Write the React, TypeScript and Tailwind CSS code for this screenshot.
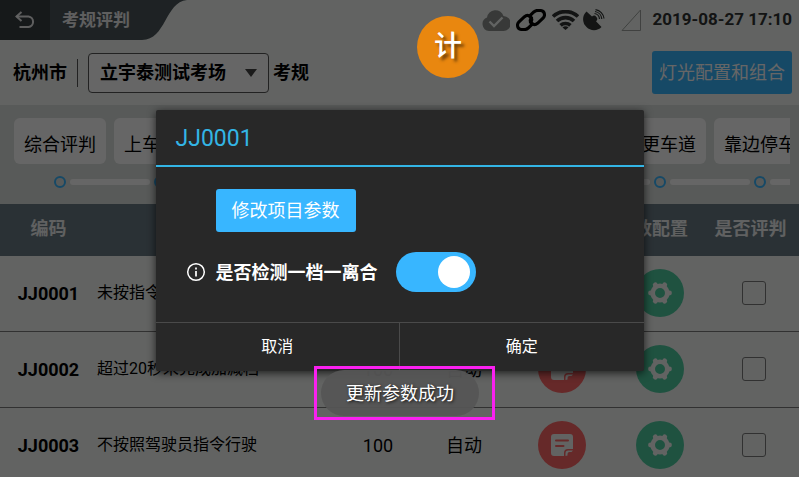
const BackIcon = () => (
  <svg width="20" height="18" viewBox="0 0 20 18" fill="none" stroke="currentColor" strokeWidth="2">
    <path d="M6.5 1 L1.5 5.5 L6.5 10" />
    <path d="M1.5 5.500 H13.500 A5.300 5.300 0 0 1 13.500 16 H4.500" />
  </svg>
);

const CloudIcon = () => (
  <svg width="28" height="22" viewBox="0 0 28 22">
    <path
      d="M7 22 A7 7 0 0 1 5 8.500 A8.500 8.500 0 0 1 21.500 7 A7.500 7.500 0 0 1 21 22 Z"
      className="fill-[#8c8f8c]"
    />
    <path d="M7.500 12.500 L12 17 L20.500 8.500" fill="none" strokeWidth="2.400" className="stroke-[#f4f8f5]" />
  </svg>
);

const LinkIcon = () => (
  <svg width="30" height="22" viewBox="0 0 30 22" fill="none" stroke="#000" strokeWidth="3.100" strokeLinecap="round">
    <path d="M13.500 7.200 L17.800 3 Q20 1 23 1.500 H24.500 Q28.500 2 28.500 6 Q28.500 7.500 27 9.200 L21.500 14.300 Q18.500 16.800 15.500 14.300 Q13 11.500 15.500 8.800" />
    <path d="M16.500 14.800 L12.200 19 Q10 21 7 20.500 H5.500 Q1.500 20 1.500 16 Q1.500 14.500 3 12.800 L8.500 7.700 Q11.500 5.200 14.500 7.700 Q17 10.500 14.500 13.200" />
  </svg>
);

const WifiIcon = () => (
  <svg width="27" height="20" viewBox="0 0 27 20" fill="none" stroke="currentColor" strokeWidth="3.700">
    <path d="M1 6.500 A18.500 18.500 0 0 1 26 6.500" />
    <path d="M5 11 A12.500 12.500 0 0 1 22 11" />
    <path d="M8.600 15.400 A7.200 7.200 0 0 1 18.400 15.400" />
    <path d="M10.500 17.600 A4.200 4.200 0 0 1 16.500 17.600 L13.500 20 Z" fill="currentColor" stroke="none" />
  </svg>
);

const DishIcon = () => (
  <svg width="22" height="22" viewBox="0 0 22 22" fill="none" stroke="currentColor" strokeWidth="1.200">
    <path
      d="M3.500 2.500 L9 7.500 A2.800 2.800 0 1 1 13 12.300 L18.500 18 A10.500 10.500 0 0 1 3.500 18 A10.500 10.500 0 0 1 3.500 2.500 Z"
      fill="currentColor"
      stroke="none"
    />
    <path d="M11.500 4.500 A6 6 0 0 1 16.500 10" />
    <path d="M12 2.500 A8 8 0 0 1 18.800 10" />
    <path d="M12.500 0.700 A10 10 0 0 1 21 9.500" />
  </svg>
);

const SignalIcon = () => (
  <svg width="20" height="22" viewBox="0 0 20 22" fill="none" className="stroke-[#a0a4a0]">
    <path d="M19.500 1 V21.500 H1 Z" />
  </svg>
);

const GearIcon = () => (
  <svg width="24" height="24" viewBox="0 0 24 24" fill="none" stroke="currentColor">
    <circle cx="12" cy="12" r="7.300" strokeWidth="4.600" />
    <path
      d="M20 12 H21.500 M16 5.070 L16.750 3.770 M8 5.070 L7.250 3.770 M4 12 H2.500 M8 18.930 L7.250 20.230 M16 18.930 L16.750 20.230"
      strokeWidth="4.800"
      strokeLinecap="round"
    />
  </svg>
);

const NoteIcon = () => (
  <svg width="22" height="22" viewBox="0 0 22 22">
    <path
      d="M3 0 H19 A3 3 0 0 1 22 3 V15 H17 A4 4 0 0 0 13 19 V22 H3 A3 3 0 0 1 0 19 V3 A3 3 0 0 1 3 0 Z"
      fill="currentColor"
    />
    <path d="M14.500 22 V19.200 A2.700 2.700 0 0 1 17.200 16.500 H22 L20.500 18 H18.500 A2 2 0 0 0 16.500 20 V21.500 Z" fill="currentColor" />
    <path d="M5 6.500 H17 M5 12 H12.500" strokeWidth="2" strokeLinecap="round" className="stroke-[#ff6666]" />
  </svg>
);

const InfoIcon = () => (
  <svg width="20" height="20" viewBox="0 0 20 20" fill="none" stroke="currentColor" strokeWidth="1.500">
    <circle cx="10" cy="10" r="8.300" />
    <path d="M10 9 V14.500 M10 5.500 V7.500" strokeWidth="1.700" />
  </svg>
);

const projects = ["综合评判", "上车准备", "起步", "直线行驶", "加减挡位", "会车", "变更车道", "靠边停车"];

const rows = [
  { code: "JJ0001", name: "未按指令平稳行驶", score: 100, mode: "自动" },
  { code: "JJ0002", name: "超过20秒未完成加减档", score: 100, mode: "自动" },
  { code: "JJ0003", name: "不按照驾驶员指令行驶", score: 100, mode: "自动" },
];

const StatusBar = () => (
  <header className="flex h-10 items-stretch justify-between">
    <div className="flex text-white/90">
      <button aria-label="返回" className="flex w-[50px] items-center justify-center bg-[#373f43]">
        <BackIcon />
      </button>
      <h1 className="flex items-center bg-[#4b555a] pt-0.5 pl-3 text-[17px] font-bold">考规评判</h1>
      <svg width="57" height="40" viewBox="0 0 57 40" className="fill-[#4b555a]">
        <path d="M0 0 H57 C35 2 36 40 12 40 H0 Z" />
      </svg>
    </div>
    <div className="flex items-center pr-[7px] text-[#303332]">
      <div className="flex items-center gap-1.5">
        <CloudIcon />
        <LinkIcon />
        <WifiIcon />
      </div>
      <div className="mr-4 ml-1">
        <DishIcon />
      </div>
      <SignalIcon />
      <time className="ml-3 text-[17px] font-bold">2019-08-27 17:10</time>
    </div>
  </header>
);

const Toolbar = () => (
  <div className="flex h-[65px] items-center justify-between pr-[7px] pl-[13px] text-[18px]">
    <div className="flex items-center font-bold text-black">
      <span>杭州市</span>
      <span className="mr-2.5 ml-2.5 h-7 w-px bg-[#555]" />
      <div className="relative">
        <select
          aria-label="考场"
          className="h-10 w-[181px] appearance-none rounded-[4px] border border-[#555] bg-white pl-[11px]"
        >
          <option>立宇泰测试考场</option>
        </select>
        <svg width="12" height="8" viewBox="0 0 12 8" className="pointer-events-none absolute top-4 right-3 fill-[#444]">
          <path d="M0 0 H12 L6 8 Z" />
        </svg>
      </div>
      <span className="ml-1">考规</span>
    </div>
    <button className="h-[43px] w-[140px] rounded-[3px] bg-[#38b6ff] text-white">灯光配置和组合</button>
  </div>
);

const ProjectList = () => (
  <div className="h-[99px] bg-[#dde1de] pt-[13px] pr-[9px] pl-2.5">
    <ul className="flex overflow-hidden">
      {projects.map((project) => (
        <li key={project} className="w-[100px] shrink-0">
          <button className="mx-1 h-[46px] w-[92px] rounded-md bg-white pt-1.5 text-[18px] text-black">
            {project}
          </button>
          <div className="mt-3 flex items-center gap-1 pl-11">
            <span className="size-3 shrink-0 rounded-full border-2 border-[#38b6ff]" />
            <span className="-mr-10 h-1.5 w-20 shrink-0 rounded-full bg-white" />
          </div>
        </li>
      ))}
    </ul>
  </div>
);

const RuleTable = () => (
  <table className="w-full table-fixed border-separate border-spacing-0 text-[18px] text-black">
    <colgroup>
      <col className="w-[97px]" />
      <col />
      <col className="w-20" />
      <col className="w-[92px]" />
      <col className="w-[104px]" />
      <col className="w-[92px]" />
      <col className="w-[93px]" />
    </colgroup>
    <thead>
      <tr className="h-[52px] bg-[#6a7b84] text-white/90 [&>th]:pb-1 [&>th]:font-bold">
        <th>编码</th>
        <th>名称</th>
        <th>扣分</th>
        <th>方式</th>
        <th>语音</th>
        <th className="pr-4 whitespace-nowrap">参数配置</th>
        <th className="pr-1 whitespace-nowrap">是否评判</th>
      </tr>
    </thead>
    <tbody>
      {rows.map((row) => (
        <tr key={row.code} className="h-[76px] text-center [&>td]:border-b [&>td]:border-[#7a7a7a] [&>td]:pb-px">
          <td className="font-bold">{row.code}</td>
          <td className="text-left text-[16px] whitespace-nowrap">{row.name}</td>
          <td>{row.score}</td>
          <td>{row.mode}</td>
          <td>
            <button
              aria-label="语音"
              className="inline-flex size-12 items-center justify-center rounded-full bg-[#ff6666] align-middle text-[#f4f8f5]"
            >
              <NoteIcon />
            </button>
          </td>
          <td>
            <button
              aria-label="配置"
              className="inline-flex size-12 items-center justify-center rounded-full bg-[#4fcda1] align-middle text-[#f4f8f5]"
            >
              <GearIcon />
            </button>
          </td>
          <td className="pl-0.5">
            <input
              type="checkbox"
              aria-label={`评判 ${row.code}`}
              className="mx-auto block size-6 appearance-none rounded-[3px] border border-[#7a7a7a]"
            />
          </td>
        </tr>
      ))}
    </tbody>
  </table>
);

const ParamDialog = () => (
  <div
    role="dialog"
    aria-labelledby="dialog-title"
    className="w-[488px] max-w-[90%] rounded-[2px] bg-[#282828] text-white shadow-[0_2px_8px_rgba(0,0,0,0.7)]"
  >
    <h2 id="dialog-title" className="border-b-2 border-[#33b5e5] px-5 pt-[13px] pb-[11px] text-[23px] leading-[31px] text-[#33b5e5]">
      JJ0001
    </h2>
    <div className="px-[30px] pt-[22px] pb-[30px]">
      <button className="ml-[30px] h-[43px] w-[140px] rounded-[3px] bg-[#38b6ff] text-[18px]">修改项目参数</button>
      <div className="mt-5 flex items-center">
        <InfoIcon />
        <label htmlFor="clutch" className="mr-[18px] ml-2.5 text-[18px] font-bold">
          是否检测一档一离合
        </label>
        <input
          id="clutch"
          type="checkbox"
          role="switch"
          defaultChecked
          className="flex h-10 w-20 appearance-none items-center rounded-full bg-[#777] px-1.5 before:size-8 before:rounded-full before:bg-white checked:justify-end checked:bg-[#38b6ff]"
        />
      </div>
    </div>
    <div className="flex h-[49px] border-t border-[#4a4a4a] text-[16px]">
      <button className="flex-1">取消</button>
      <button className="flex-1 border-l border-[#4a4a4a]">确定</button>
    </div>
  </div>
);

const App = () => {
  return (
    <div className="relative h-screen overflow-hidden bg-[#f4f8f5] font-['Roboto','Noto_Sans_CJK_SC',sans-serif]">
      <StatusBar />
      <Toolbar />
      <ProjectList />
      <RuleTable />
      <div className="absolute inset-0 flex items-center justify-center bg-black/60 pt-1">
        <ParamDialog />
      </div>
      <div className="absolute top-4 left-[417px] flex size-[62px] items-center justify-center rounded-full bg-[#e9870f] text-[28px] font-medium text-white [text-shadow:3px_3px_3px_rgba(0,0,0,0.5)]">
        计
      </div>
      <div className="absolute bottom-[57px] left-[314px] border-[3px] border-[#fa20f0] py-px pr-[13px] pl-1">
        <div
          role="status"
          className="flex h-[46px] items-center rounded-full bg-[#555]/95 px-[25px] text-[18px] text-white [text-shadow:1px_1px_3px_rgba(0,0,0,0.8)]"
        >
          更新参数成功
        </div>
      </div>
    </div>
  );
};

export default App;
